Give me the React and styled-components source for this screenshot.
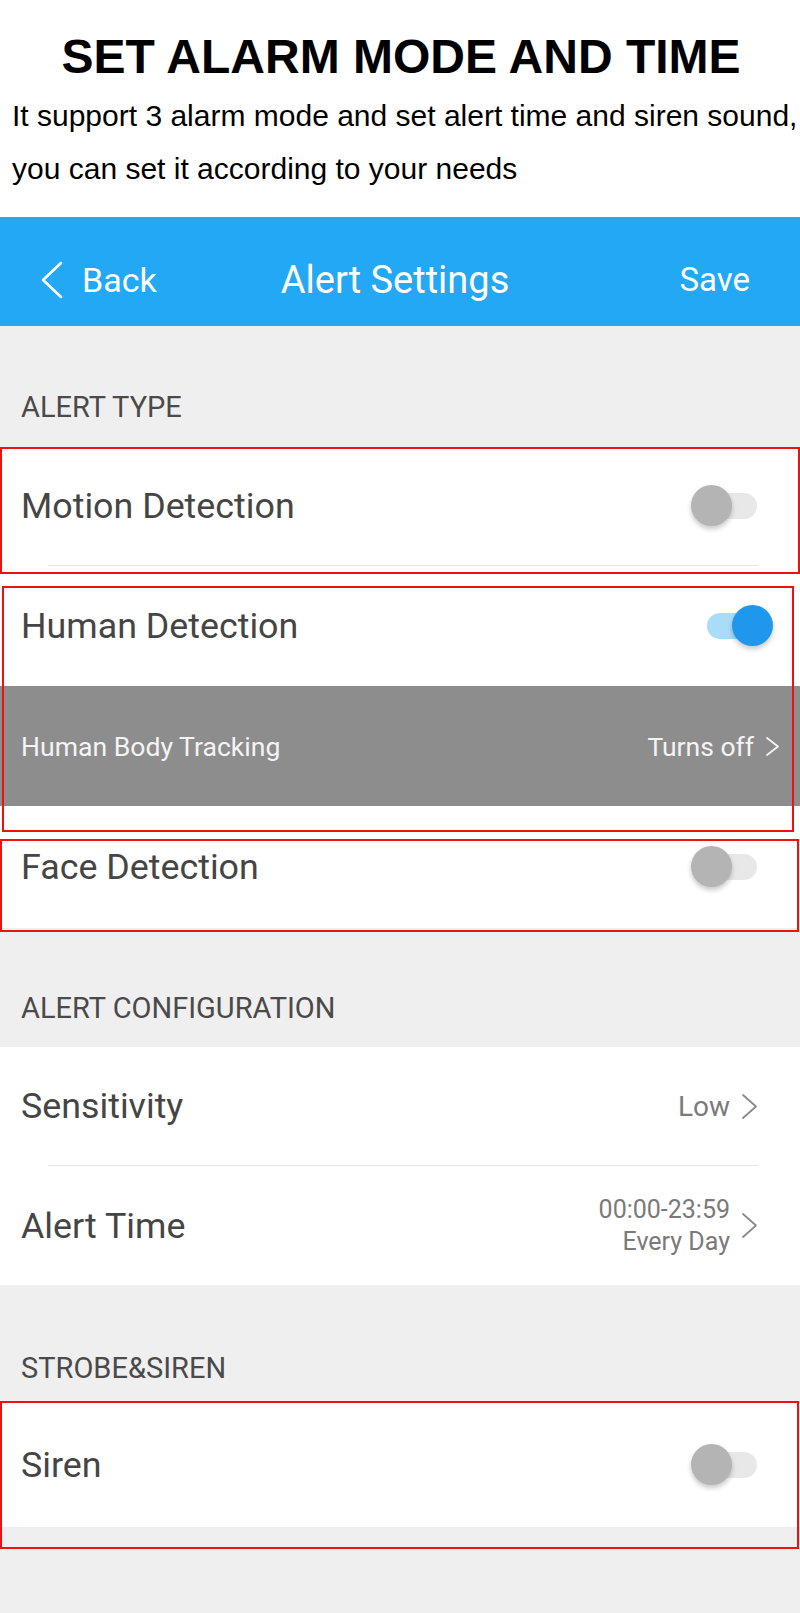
import React from 'react';
import styled, { createGlobalStyle } from 'styled-components';

const GlobalStyle = createGlobalStyle`
  html, body {
    margin: 0;
    padding: 0;
    background: #ffffff;
  }
  * {
    box-sizing: border-box;
  }
`;

const Page = styled.div`
  width: 800px;
  min-height: 1613px;
  display: flex;
  flex-direction: column;
  background: #ffffff;
`;

const Intro = styled.div`
  padding: 29px 0 22px 12px;
  font-family: 'Liberation Sans', Arial, sans-serif;
  color: #000;
`;

const Title = styled.h1`
  margin: 0;
  padding-right: 10px;
  font-size: 48px;
  line-height: 56px;
  font-weight: 700;
  text-align: center;
`;

const Lead = styled.p`
  margin: 4px 0 0;
  font-size: 30px;
  line-height: 53px;
  white-space: nowrap;
`;

const Screen = styled.div`
  position: relative;
  flex: 1;
  background: #efefef;
  font-family: Roboto, 'Noto Sans', sans-serif;
`;

const NavBar = styled.div`
  height: 109px;
  display: grid;
  grid-template-columns: 1fr auto 1fr;
  align-items: center;
  padding-top: 16px;
  background: #22a8f5;
  color: #ffffff;
`;

const BackButton = styled.div`
  display: flex;
  align-items: center;
  gap: 18px;
  padding-left: 40px;
  font-size: 34px;
`;

const NavTitle = styled.div`
  font-size: 38px;
  padding-right: 10px;
`;

const SaveButton = styled.div`
  justify-self: end;
  padding-right: 50px;
  font-size: 33px;
`;

const SectionTitle = styled.div`
  padding: ${(p) => p.$top}px 21px ${(p) => p.$bottom}px;
  font-size: 29px;
  line-height: 33px;
  color: #4a4a4a;
`;

const List = styled.div`
  background: #ffffff;
`;

const Row = styled.div`
  height: ${(p) => p.$h}px;
  display: flex;
  align-items: center;
  justify-content: space-between;
  padding: 0 ${(p) => p.$right}px 0 21px;
  background: ${(p) => (p.$dark ? '#8d8d8d' : '#ffffff')};
`;

const Label = styled.span`
  font-size: ${(p) => (p.$small ? 26.6 : 35.8)}px;
  color: ${(p) => (p.$light ? '#f4f4f4' : '#454545')};
`;

const Divider = styled.div`
  height: 1px;
  margin: 0 42px 0 48px;
  background: #e6e6e6;
`;

const Value = styled.div`
  display: flex;
  align-items: center;
  gap: 11px;
  color: ${(p) => (p.$light ? '#f4f4f4' : '#7a7a7a')};
  font-size: ${(p) => p.$size}px;
`;

const ValueStack = styled.div`
  display: flex;
  flex-direction: column;
  align-items: flex-end;
  font-size: 25px;
  line-height: 32px;
`;

const Toggle = styled.div`
  position: relative;
  width: 82px;
  height: 42px;
`;

const Track = styled.div`
  position: absolute;
  left: 16px;
  right: 16px;
  top: 8px;
  height: 26px;
  border-radius: 13px;
  background: ${(p) => (p.$on ? '#a9dcf8' : '#e8e8e8')};
`;

const Knob = styled.div`
  position: absolute;
  top: 0;
  left: ${(p) => (p.$on ? 41 : 0)}px;
  width: 41px;
  height: 41px;
  border-radius: 50%;
  background: ${(p) => (p.$on ? '#1e97ec' : '#b4b4b4')};
  box-shadow: 0 3px 5px rgba(0, 0, 0, 0.22);
`;

const Marker = styled.div`
  position: absolute;
  border: 2px solid #ee1111;
  pointer-events: none;
`;

const Chevron = ({ w = 17, h = 27, color = '#8a8a8a' }) => (
  <svg width={w} height={h} viewBox={`0 0 ${w} ${h}`} fill="none">
    <polyline
      points={`2,2 ${w - 2},${h / 2} 2,${h - 2}`}
      stroke={color}
      strokeWidth="1.8"
      strokeLinecap="round"
      strokeLinejoin="round"
    />
  </svg>
);

const BackArrow = () => (
  <svg width="24" height="38" viewBox="0 0 24 38" fill="none">
    <polyline
      points="21,2 3,19 21,36"
      stroke="#ffffff"
      strokeWidth="2.6"
      strokeLinecap="round"
      strokeLinejoin="round"
    />
  </svg>
);

const Switch = ({ on }) => (
  <Toggle>
    <Track $on={on} />
    <Knob $on={on} />
  </Toggle>
);

const markers = [
  { top: 230, left: 0, width: 800, height: 127 },
  { top: 369, left: 2, width: 792, height: 246 },
  { top: 622, left: 0, width: 799, height: 93 },
  { top: 1184, left: 0, width: 799, height: 148 },
];

const App = () => {
  return (
    <>
      <GlobalStyle />
      <Page>
        <Intro>
          <Title>SET ALARM MODE AND TIME</Title>
          <Lead>
            It support 3 alarm mode and set alert time and siren sound,
            <br />
            you can set it according to your needs
          </Lead>
        </Intro>

        <Screen>
          <NavBar>
            <BackButton>
              <BackArrow />
              <span>Back</span>
            </BackButton>
            <NavTitle>Alert Settings</NavTitle>
            <SaveButton>Save</SaveButton>
          </NavBar>

          <SectionTitle $top={65} $bottom={23}>ALERT TYPE</SectionTitle>
          <List>
            <Row $h={118} $right={27}>
              <Label>Motion Detection</Label>
              <Switch on={false} />
            </Row>
            <Divider />
            <Row $h={120} $right={27}>
              <Label>Human Detection</Label>
              <Switch on />
            </Row>
            <Row $h={120} $right={20} $dark>
              <Label $small $light>Human Body Tracking</Label>
              <Value $size={26.5} $light>
                <span>Turns off</span>
                <Chevron w={15} h={21} color="#f4f4f4" />
              </Value>
            </Row>
            <Row $h={122} $right={27}>
              <Label>Face Detection</Label>
              <Switch on={false} />
            </Row>
          </List>

          <SectionTitle $top={64} $bottom={22}>ALERT CONFIGURATION</SectionTitle>
          <List>
            <Row $h={118} $right={42}>
              <Label>Sensitivity</Label>
              <Value $size={28}>
                <span>Low</span>
                <Chevron />
              </Value>
            </Row>
            <Divider />
            <Row $h={119} $right={42}>
              <Label>Alert Time</Label>
              <Value $size={25}>
                <ValueStack>
                  <span>00:00-23:59</span>
                  <span>Every Day</span>
                </ValueStack>
                <Chevron />
              </Value>
            </Row>
          </List>

          <SectionTitle $top={67} $bottom={18}>STROBE&amp;SIREN</SectionTitle>
          <List>
            <Row $h={124} $right={27}>
              <Label>Siren</Label>
              <Switch on={false} />
            </Row>
          </List>

          {markers.map((m, i) => (
            <Marker
              key={i}
              style={{ top: m.top, left: m.left, width: m.width, height: m.height }}
            />
          ))}
        </Screen>
      </Page>
    </>
  );
};

export default App;
